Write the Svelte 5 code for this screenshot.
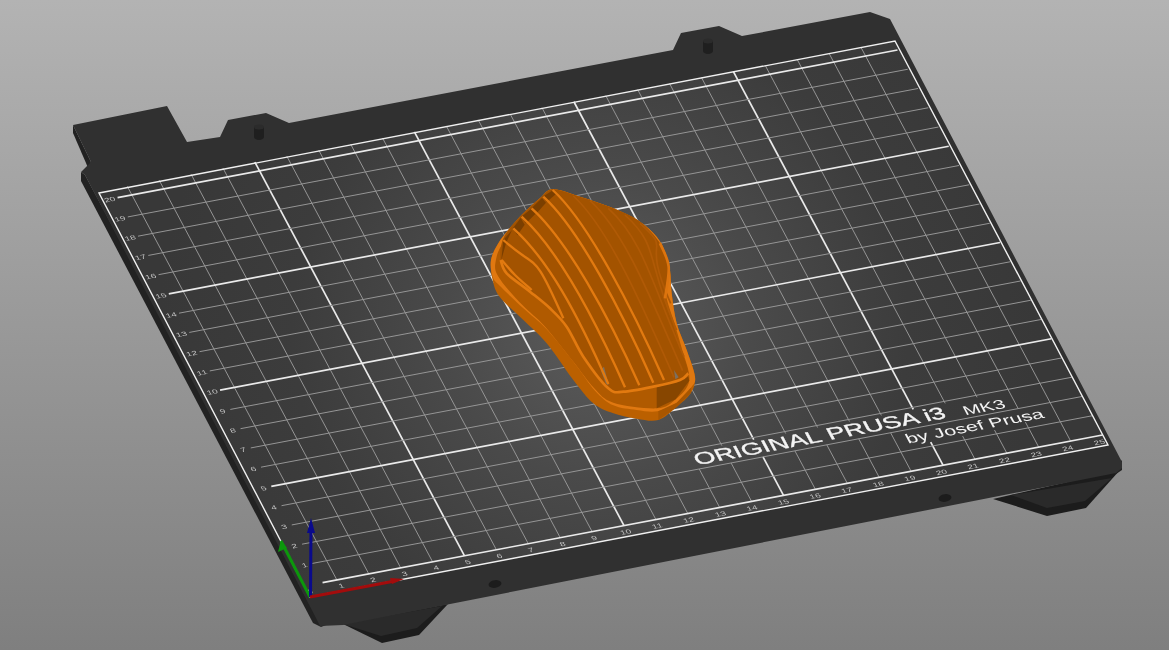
<script>
  // plate coordinates in cm -> screen pixels
  const P = (x, y) => [305 + 31.9 * x - 10.25 * y, 586 - 6.04 * x - 19.25 * y];

  function gapsFor(x) {
    if (x >= 20 && x <= 22) return [[1.2, 2.9]];
    if (x === 23) return [[1.3, 2.0]];
    if (x >= 13 && x < 20) return [[2.0, 2.9]];
    return [];
  }

  const verticals = [];
  for (let x = 1; x < 25; x++) {
    let from = 0;
    for (const [a, b] of gapsFor(x)) {
      verticals.push({ x, from, to: a });
      from = b;
    }
    verticals.push({ x, from, to: 20.45 });
  }

  const horizontals = [];
  for (let y = 0; y <= 20; y++) horizontals.push(y);

  const xLabels = Array.from({ length: 26 }, (_, i) => i);
  const yLabels = Array.from({ length: 20 }, (_, i) => i + 1);

  // closed or open catmull-rom through points
  function smooth(p, closed = false) {
    const n = p.length;
    const at = (i) => (closed ? p[(i + n) % n] : p[Math.max(0, Math.min(n - 1, i))]);
    let d = `M${p[0][0]} ${p[0][1]}`;
    const end = closed ? n : n - 1;
    for (let i = 0; i < end; i++) {
      const [a, b, c, e] = [at(i - 1), at(i), at(i + 1), at(i + 2)];
      const c1 = [b[0] + (c[0] - a[0]) / 6, b[1] + (c[1] - a[1]) / 6];
      const c2 = [c[0] - (e[0] - b[0]) / 6, c[1] - (e[1] - b[1]) / 6];
      d += `C${c1[0].toFixed(1)} ${c1[1].toFixed(1)} ${c2[0].toFixed(1)} ${c2[1].toFixed(1)} ${c[0]} ${c[1]}`;
    }
    return closed ? d + "Z" : d;
  }

  const topEdge = [[218,28],[300,50],[400,85],[480,125],[530,170],[555,215],[570,270],[575,340],[590,430],[620,510],[645,590]];
  const leftEdge = [[38,300],[33,240],[55,190],[85,150],[130,100],[180,55]];

  const body = smooth([...topEdge,[632,640],[590,680],[535,720],[470,716],[400,700],[340,670],[280,600],[200,490],[130,420],[60,352],...leftEdge], true);
  const rim = smooth([...topEdge,[634,622],[590,668],[532,694],[470,690],[400,676],[345,632],[285,552],[200,448],[130,385],[60,318],[38,290],[33,240],[55,190],[85,150],[130,100],[180,55]], true);
  const wall = smooth([[46,250],[62,300],[128,376],[194,439],[279,544],[342,624],[400,668],[530,685],[587,658],[628,600],[604,500],[580,420],[560,355],[540,250],[400,150],[200,120],[80,180]], true);
  const floor = smooth([[62,240],[80,280],[150,335],[210,385],[260,440],[310,530],[385,625],[430,635],[520,620],[600,600],[625,580],[600,500],[575,420],[555,355],[565,260],[540,190],[480,125],[400,85],[300,50],[218,28],[180,55],[130,100],[85,150],[65,190]], true);
  const inner = smooth([[62,240],[80,280],[150,335],[210,385],[260,440],[310,530],[385,625],[430,635],[520,620],[600,600],[625,580]]);

  // every rib bends the same way, from the top left edge to the front wall
  const rib = (s, e) =>
    `M${s[0]} ${s[1]}C${s[0] + 105} ${s[1] + 95} ${e[0] - 95} ${e[1] - 215} ${e[0]} ${e[1]}`;

  const ribs = [
    [[70, 180], [250, 415]],
    [[100, 145], [385, 612]],
    [[125, 110], [435, 622]],
    [[155, 85], [478, 616]],
    [[190, 50], [520, 608]],
    [[218, 30], [552, 600]],
  ].map(([s, e]) => rib(s, e));

  const fadedRibs = [
    [[280, 48], [582, 592]],
    [[330, 62], [608, 572]],
    [[385, 85], [612, 530]],
    [[435, 105], [590, 450]],
    [[480, 130], [572, 370]],
  ].map(([s, e]) => rib(s, e));

  const wedges = [
    "216,32 188,50 200,66 228,42",
    "186,54 155,84 170,100 198,68",
    "152,88 124,110 138,130 166,102",
    "122,114 99,144 112,166 134,134",
    "96,150 70,180 64,240 78,190",
  ];
</script>

<div class="scene">
  <svg viewBox="0 0 1169 650" width="1169" height="650" xmlns="http://www.w3.org/2000/svg">
    <defs>
      <radialGradient id="glow" gradientUnits="userSpaceOnUse" cx="600" cy="325" r="440">
        <stop offset="0" stop-color="#5c5c5c" />
        <stop offset="0.35" stop-color="#4a4a4a" />
        <stop offset="0.7" stop-color="#3c3c3c" />
        <stop offset="1" stop-color="#383838" />
      </radialGradient>
    </defs>

    <!-- feet -->
    <polygon class="foot-side" points="343,624 382,643 419,635 448,604" />
    <polygon class="foot-top" points="343,624 381,636 417,628 442,606" />
    <polygon class="foot-side" points="993,499 1047,516 1086,508 1120,470" />
    <polygon class="foot-top" points="1011,495 1047,508 1085,501 1112,478" />

    <!-- plate -->
    <polygon class="edge" points="73,125 73,133 89,170 91,162" />
    <polygon class="edge" points="81,172 81,181 313,623 321,627 326,625 85,175" />
    <polygon class="edge" points="1122,460 1122,470 1116,474 1112,472" />
    <polygon class="plate" points="73,125 167,106 187,142 220,137 228,120 266,113 289,123 673,50 681,33 719,26 742,36 870,12 890,19 1122,462 1122,468 1116,473 343,625 320,626 316,618 85,175 81,172 91,162" />

    <!-- pegs and holes -->
    <path class="peg" d="M254 127v10a5 3 0 0 0 10 0v-10z" />
    <ellipse class="peg-top" cx="259" cy="127" rx="5" ry="2.5" />
    <path class="peg" d="M703 41v10a5 3 0 0 0 10 0v-10z" />
    <ellipse class="peg-top" cx="708" cy="41" rx="5" ry="2.5" />
    <ellipse class="hole" cx="495" cy="584" rx="6.5" ry="3.8" transform="rotate(-8 495 584)" />
    <ellipse class="hole" cx="945" cy="498" rx="6.5" ry="3.8" transform="rotate(-8 945 498)" />

    <!-- printable area -->
    <polygon fill="url(#glow)" points="99,193 895,41 1108,445 310,597" />

    <g class="soft">
      {#each verticals as v}
        {@const a = P(v.x, v.from)}
        {@const b = P(v.x, v.to)}
        <line class={v.x % 5 === 0 ? "bold" : "thin"} x1={a[0]} y1={a[1]} x2={b[0]} y2={b[1]} />
      {/each}
      {#each horizontals as y}
        {@const a = P(0.55, y)}
        {@const b = P(25, y)}
        <line class={y % 5 === 0 ? "bold" : "thin"} x1={a[0]} y1={a[1]} x2={b[0]} y2={b[1]} />
      {/each}
      <polygon class="frame" points="99,193 895,41 1108,445 310,597" />

      <!-- text lies on the plate, so it uses the plate's own axes (mm) -->
      <g transform="matrix(3.19 -0.604 1.025 1.925 305 586)">
        {#each xLabels as x}
          <text class="label" x={x * 9.9 + 0.5} y="4.2" text-anchor="middle">{x}</text>
        {/each}
        {#each yLabels as y}
          <text class="label" x="3" y={-y * 10 + 1.2} text-anchor="middle">{y}</text>
        {/each}
        <text class="brand heavy" x="130" y="-22" font-size="8.3">ORIGINAL PRUSA i3</text>
        <text class="brand" x="214" y="-21.5" font-size="6.3">MK3</text>
        <text class="brand" x="193.4" y="-13.4" font-size="6.5">by Josef Prusa</text>
      </g>
    </g>

    <!-- printed part -->
    <g transform="translate(480 180) scale(0.33333)">
      <path d={body} fill="#bb6000" />
      <path d={rim} fill="#e07810" />
      <path d={wall} fill="#b05a00" />
      <polygon points="530,622 625,590 628,602 587,658 530,685" fill="#874600" />
      <path d={floor} fill="#a35300" />
      <polygon points="372,560 386,615 378,612 362,570" fill="#7d705f" />
      <polygon points="582,570 596,592 586,598" fill="#7d705f" />
      {#each wedges as w}
        <polygon points={w} fill="#7b3f00" />
      {/each}
      {#each fadedRibs as d}
        <path {d} fill="none" stroke="#b05a06" stroke-width="5" />
      {/each}
      {#each ribs as d}
        <path {d} fill="none" stroke="#e27a10" stroke-width="7" />
      {/each}
      <path d={smooth([[65,240],[105,285],[155,330]])} fill="none" stroke="#e27a10" stroke-width="7" />
      <path d={inner} fill="none" stroke="#e27a10" stroke-width="8" />
      <path d={smooth([[540,190],[566,260],[555,355]])} fill="none" stroke="#dc740e" stroke-width="8" />
      <polygon points="535,694 590,668 634,622 632,640 590,682 535,720" fill="#a85600" />
    </g>

    <!-- axes -->
    <g class="axes">
      <line x1="310" y1="597" x2="281" y2="541" stroke="#0c970c" />
      <polygon points="281,540 278,552 287,548" fill="#0c970c" />
      <line x1="310.5" y1="597" x2="311" y2="525" stroke="#0a0a8c" />
      <polygon points="311,518 307,533 315,533" fill="#0a0a8c" />
      <line x1="310" y1="597" x2="395" y2="581" stroke="#a30c0c" />
      <polygon points="404,579 390,578 392,584" fill="#a30c0c" />
    </g>
  </svg>
</div>

<style>
  :global(body) {
    margin: 0;
    overflow: hidden;
  }

  .scene {
    width: 1169px;
    height: 650px;
    background: linear-gradient(#b3b3b3, #7f7f7f);
  }

  svg {
    display: block;
  }

  .plate { fill: #303030; }
  .edge { fill: #222222; }
  .foot-side { fill: #1c1c1c; }
  .foot-top { fill: #2a2a2a; }
  .peg { fill: #1f1f1f; }
  .peg-top { fill: #2b2b2b; }
  .hole { fill: #1c1c1c; }

  .soft { filter: blur(0.3px); }

  .thin { stroke: #959595; stroke-width: 1; }
  .bold { stroke: #eaeaea; stroke-width: 1.7; }
  .frame { fill: none; stroke: #f0f0f0; stroke-width: 1.4; }

  .label {
    font-family: "Liberation Sans", Arial, sans-serif;
    font-size: 3px;
    fill: #c4c4c4;
  }

  .brand {
    font-family: "Liberation Sans", Arial, sans-serif;
    fill: #f4f4f4;
  }

  .heavy {
    stroke: #f4f4f4;
    stroke-width: 0.15;
  }

  .axes line {
    stroke-width: 3;
  }
</style>
